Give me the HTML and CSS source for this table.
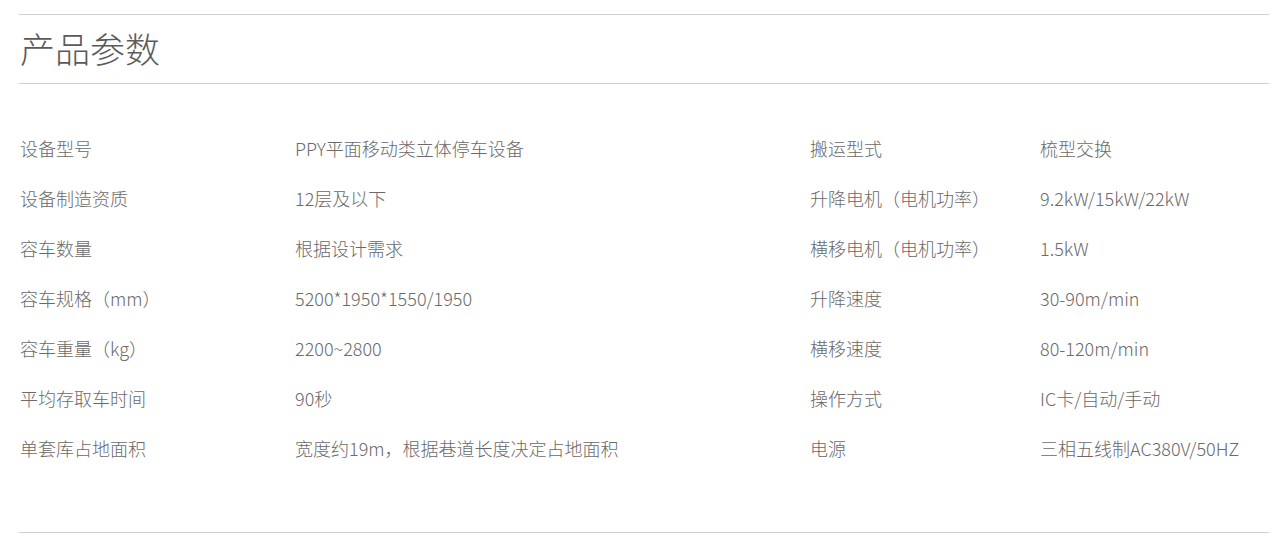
FILE: index.html
```html
<!DOCTYPE html>
<html lang="zh-CN">
<head>
<meta charset="utf-8">
<title>产品参数</title>
<link rel="stylesheet" href="styles.css">
</head>
<body>
<section class="params">
  <h2 class="params-title">产品参数</h2>
  <div class="params-table">
    <div class="cell label">设备型号</div>
    <div class="cell value">PPY平面移动类立体停车设备</div>
    <div class="cell label">搬运型式</div>
    <div class="cell value">梳型交换</div>

    <div class="cell label">设备制造资质</div>
    <div class="cell value">12层及以下</div>
    <div class="cell label">升降电机（电机功率）</div>
    <div class="cell value">9.2kW/15kW/22kW</div>

    <div class="cell label">容车数量</div>
    <div class="cell value">根据设计需求</div>
    <div class="cell label">横移电机（电机功率）</div>
    <div class="cell value">1.5kW</div>

    <div class="cell label">容车规格（mm）</div>
    <div class="cell value">5200*1950*1550/1950</div>
    <div class="cell label">升降速度</div>
    <div class="cell value">30-90m/min</div>

    <div class="cell label">容车重量（kg）</div>
    <div class="cell value">2200~2800</div>
    <div class="cell label">横移速度</div>
    <div class="cell value">80-120m/min</div>

    <div class="cell label">平均存取车时间</div>
    <div class="cell value">90秒</div>
    <div class="cell label">操作方式</div>
    <div class="cell value">IC卡/自动/手动</div>

    <div class="cell label">单套库占地面积</div>
    <div class="cell value">宽度约19m，根据巷道长度决定占地面积</div>
    <div class="cell label">电源</div>
    <div class="cell value">三相五线制AC380V/50HZ</div>
  </div>
</section>
</body>
</html>
```
FILE: styles.css
```css
html, body {
  margin: 0;
  padding: 0;
  background: #fff;
}
body {
  font-family: "Noto Sans CJK SC", "Noto Sans", sans-serif;
  color: #666;
}
.params {
  margin: 14px 0 0 19px;
  width: 1250px;
  border-top: 1px solid #cfcfcf;
  border-bottom: 1px solid #cfcfcf;
  padding-bottom: 59px;
}
.params-title {
  margin: 0;
  height: 68px;
  line-height: 65px;
  font-size: 35px;
  font-weight: 200;
  color: #5a5a5a;
  padding-left: 1px;
  border-bottom: 1px solid #cfcfcf;
}
.params-table {
  margin-top: 39px;
  display: grid;
  grid-template-columns: 275px 515px 230px 1fr;
  grid-auto-rows: 50px;
}
.cell {
  font-size: 18px;
  font-weight: 300;
  line-height: 50px;
  padding-left: 1px;
  white-space: nowrap;
  color: #6a6a6a;
}
```
